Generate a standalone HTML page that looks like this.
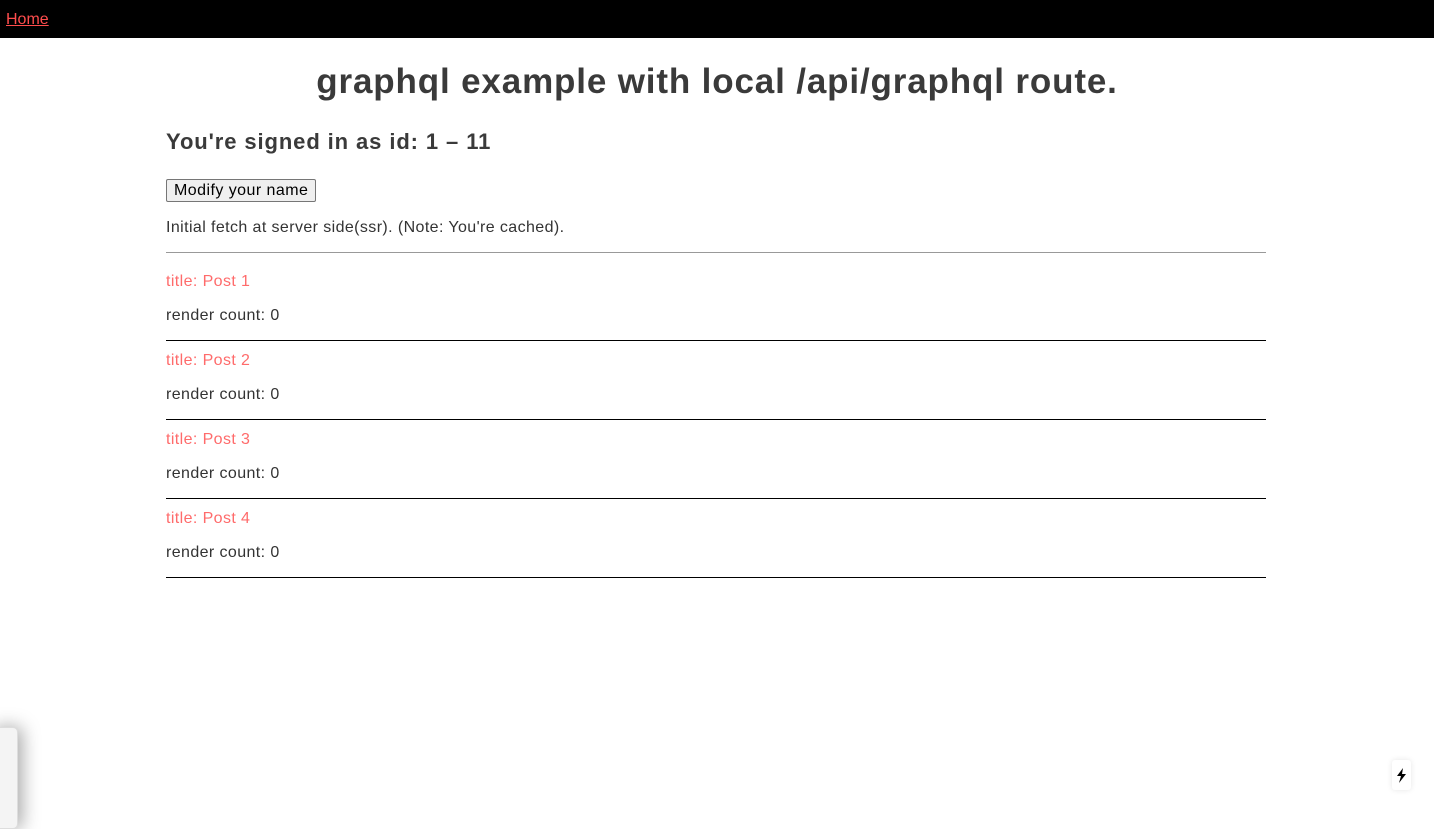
<!DOCTYPE html>
<html><head><meta charset="utf-8"><style>
body{margin:0;font-family:"Liberation Sans",sans-serif;color:#333;background:#fff;width:1434px;height:811px;overflow:hidden;position:relative}
.nav{height:38px;background:#000}
.nav a{position:absolute;left:6px;top:11px;color:#ff4d4d;font-size:16px;text-decoration:underline}
h1{position:absolute;left:0;width:1434px;top:62px;margin:0;text-align:center;font-size:35px;font-weight:bold;color:#3a3a3a;letter-spacing:0.85px}
.c{position:absolute;left:166px;width:1100px}
h2{margin:0;font-size:22px;font-weight:bold;color:#3a3a3a;letter-spacing:0.9px}
button{font:16px "Liberation Sans",sans-serif;padding:0 7px;height:23px;background:#efefef;border:1px solid #767676;border-radius:2px;color:#000;letter-spacing:0.45px}
.t{color:#ff6b6b;font-size:16px;letter-spacing:0.4px}
.r{font-size:16px;letter-spacing:0.4px}
.line{position:absolute;left:166px;width:1100px;height:1px;background:#000}
</style></head><body>
<div class="nav"><a href="#">Home</a></div>
<h1>graphql example with local /api/graphql route.</h1>
<div class="c" style="top:129px"><h2>You're signed in as id: 1 – 11</h2></div>
<div class="c" style="top:179px"><button>Modify your name</button></div>
<div class="c r" style="top:219px">Initial fetch at server side(ssr). (Note: You're cached).</div>
<div class="line" style="top:252px;background:#999"></div>
<div class="c t" style="top:273px">title: Post 1</div><div class="c r" style="top:307px">render count: 0</div>
<div class="line" style="top:340px"></div>
<div class="c t" style="top:352px">title: Post 2</div><div class="c r" style="top:386px">render count: 0</div>
<div class="line" style="top:419px"></div>
<div class="c t" style="top:431px">title: Post 3</div><div class="c r" style="top:465px">render count: 0</div>
<div class="line" style="top:498px"></div>
<div class="c t" style="top:510px">title: Post 4</div><div class="c r" style="top:544px">render count: 0</div>
<div class="line" style="top:577px"></div>
<div style="position:absolute;left:-10px;top:727px;width:26px;height:100px;background:#f4f4f4;border:1px solid #ddd;border-radius:5px;box-shadow:4px 0 18px rgba(0,0,0,.35)"></div>
<div style="position:absolute;left:1392px;top:760px;width:19px;height:30px;background:#fff;border-radius:3px;box-shadow:0 0 6px rgba(0,0,0,.1)">
<svg width="19" height="30" viewBox="0 0 19 30"><path d="M11 8 L5 16 L9 16 L7 23 L14 14 L10 14 Z" fill="#000"/></svg></div>
</body></html>
